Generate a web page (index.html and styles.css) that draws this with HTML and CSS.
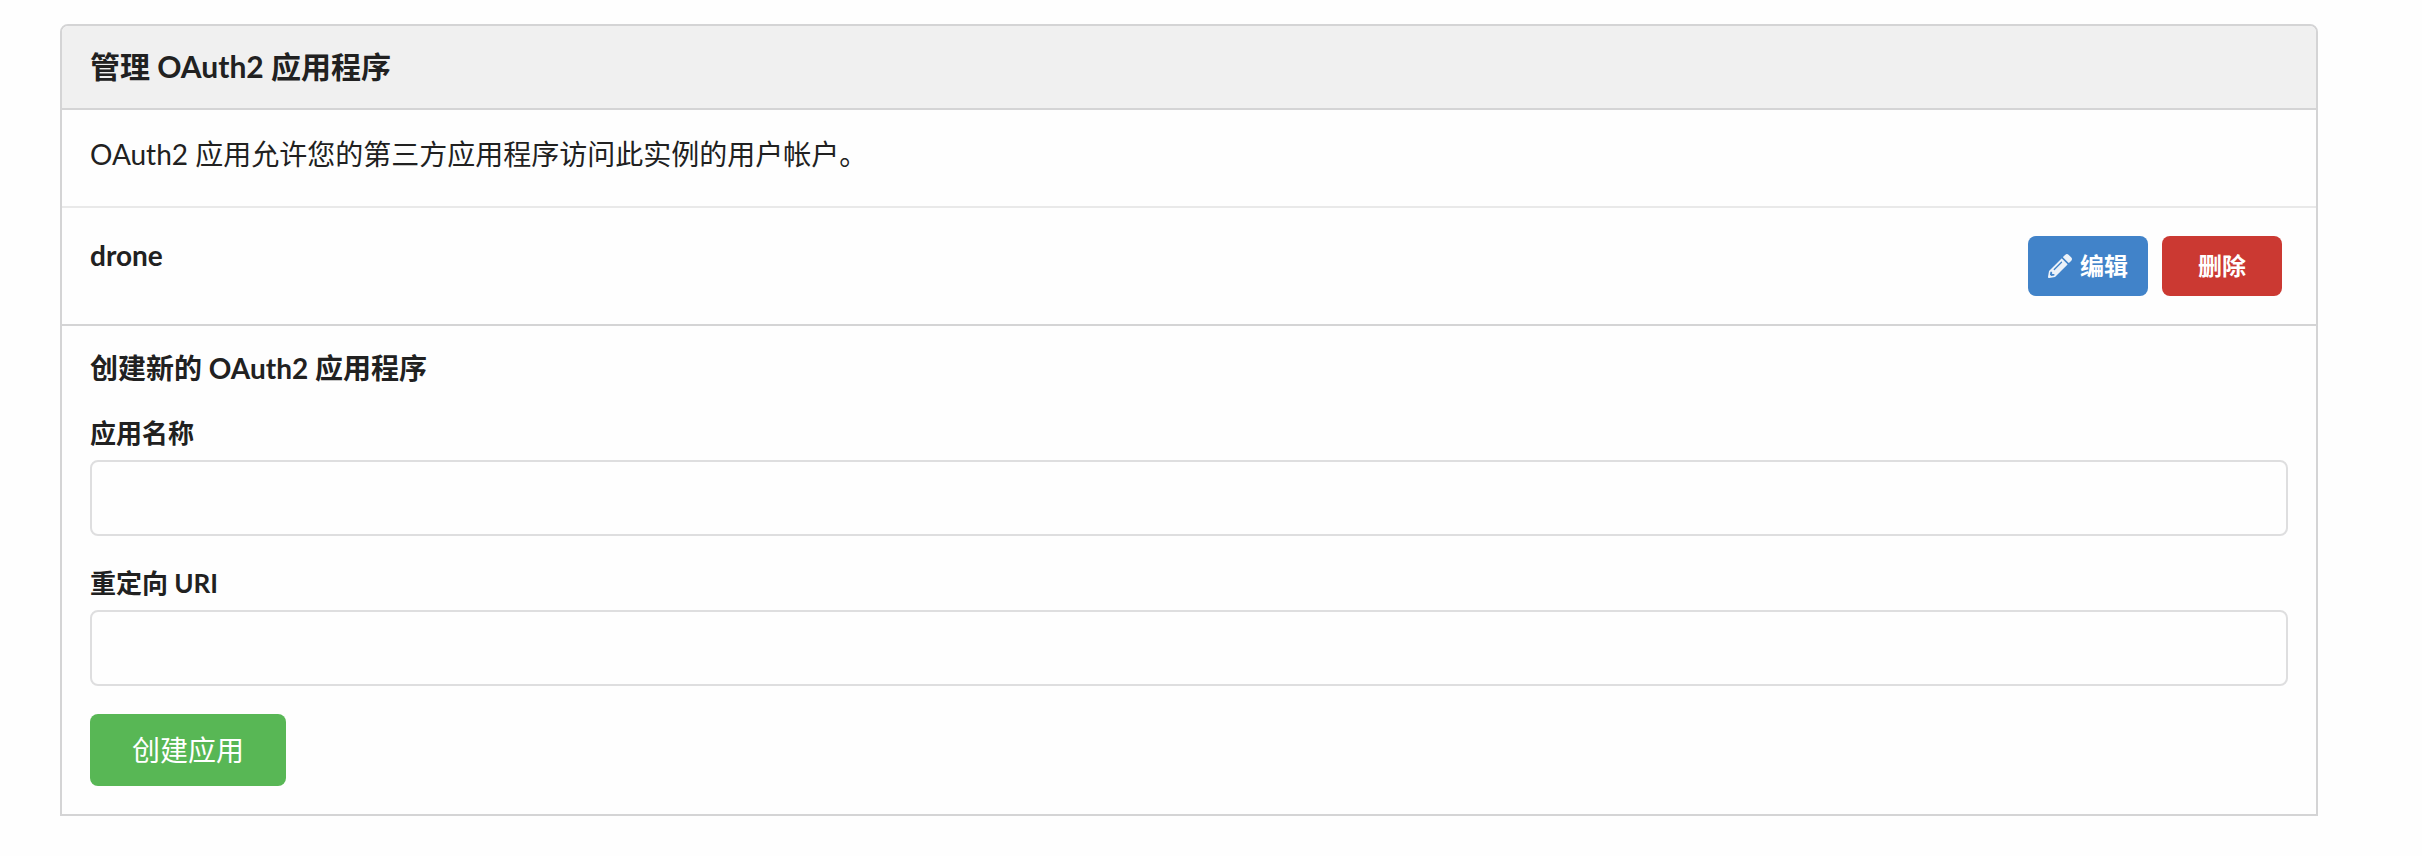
FILE: index.html
```
<!DOCTYPE html>
<html lang="zh-CN">
<head>
<meta charset="utf-8">
<meta name="viewport" content="width=device-width, initial-scale=1">
<title>管理 OAuth2 应用程序</title>
<link rel="stylesheet" href="styles.css">
</head>
<body>
<main class="panel">
  <h1 class="panel-header">管理 OAuth2 应用程序</h1>
  <p class="panel-intro">OAuth2 应用允许您的第三方应用程序访问此实例的用户帐户。</p>
  <div class="app-row">
    <strong class="app-name">drone</strong>
    <div class="app-actions">
      <button type="button" class="button button-small button-blue">
        <svg class="icon" viewBox="0 0 512 512" aria-hidden="true">
          <path fill="currentColor" d="M497.900 142.100l-46.100 46.100c-4.700 4.700-12.300 4.700-17 0l-111-111c-4.700-4.700-4.700-12.300 0-17l46.100-46.100c18.700-18.700 49.100-18.700 67.900 0l60.100 60.100c18.800 18.700 18.800 49.100 0 67.900zM284.200 99.800L21.600 362.400.4 483.900c-2.900 16.400 11.400 30.600 27.800 27.800l121.500-21.300 262.600-262.600c4.700-4.700 4.700-12.300 0-17l-111-111c-4.800-4.700-12.400-4.700-17.100 0zM124.100 339.900c-5.500-5.500-5.500-14.300 0-19.800l154-154c5.500-5.500 14.300-5.500 19.800 0s5.500 14.300 0 19.800l-154 154c-5.500 5.500-14.300 5.500-19.800 0zM88 424h48v36.300l-64.500 11.300-31.100-31.100L51.700 376H88v48z"/>
        </svg>
        编辑
      </button>
      <button type="button" class="button button-small button-red">删除</button>
    </div>
  </div>
  <form class="create-form">
    <h2 class="form-title">创建新的 OAuth2 应用程序</h2>
    <div class="field">
      <label class="label" for="application-name">应用名称</label>
      <input class="input" id="application-name" name="application_name" type="text">
    </div>
    <div class="field">
      <label class="label" for="redirect-uri">重定向 URI</label>
      <input class="input" id="redirect-uri" name="redirect_uri" type="text">
    </div>
    <button type="button" class="button button-green">创建应用</button>
  </form>
</main>
</body>
</html>
```
FILE: styles.css
```
* {
  box-sizing: border-box;
}

body {
  margin: 0;
  padding: 24px 104px 40px 60px;
  background: #fefefe;
  color: #212121;
  font-family: Lato, "Noto Sans CJK SC", sans-serif;
  font-size: 28px;
  line-height: 36px;
}

button,
input {
  font: inherit;
}

.panel {
  border: 2px solid #d4d4d5;
  border-radius: 8px 8px 0 0;
  background: #fefefe;
}

.panel-header {
  margin: 0;
  padding: 22px 28px 24px;
  border-bottom: 2px solid #d4d4d5;
  border-radius: 6px 6px 0 0;
  background: #f0f0f0;
  font-size: 30px;
  font-weight: 700;
}

.panel-intro {
  margin: 0;
  padding: 26px 28px 34px;
}

.app-row {
  display: flex;
  justify-content: space-between;
  align-items: flex-start;
  padding: 28px 34px 28px 28px;
  border-top: 2px solid #e9e9e9;
}

.app-name {
  font-weight: 700;
  line-height: 38px;
}

.app-actions {
  display: flex;
  gap: 14px;
}

.button {
  display: inline-flex;
  align-items: center;
  justify-content: center;
  gap: 8px;
  padding: 18px 42px;
  border: 0;
  border-radius: 8px;
  color: #fff;
  cursor: pointer;
}

.button-small {
  min-width: 120px;
  padding: 12px 20px;
  font-size: 24px;
  font-weight: 700;
}

.button-blue {
  background: #4183c9;
}

.button-red {
  background: #cb3932;
}

.button-green {
  background: #58b755;
}

.icon {
  width: 24px;
  height: 24px;
  opacity: 0.9;
}

.create-form {
  padding: 28px;
  border-top: 2px solid #d4d4d5;
}

.form-title {
  margin: 0 0 32px;
  font-size: 28px;
  font-weight: 700;
  line-height: 28px;
}

.field {
  margin-bottom: 28px;
}

.label {
  display: block;
  margin-bottom: 8px;
  font-size: 26px;
  font-weight: 700;
  line-height: 38px;
}

.input {
  display: block;
  width: 100%;
  padding: 18px 26px;
  border: 2px solid #dededf;
  border-radius: 8px;
  background: #fefefe;
  color: inherit;
}
```
